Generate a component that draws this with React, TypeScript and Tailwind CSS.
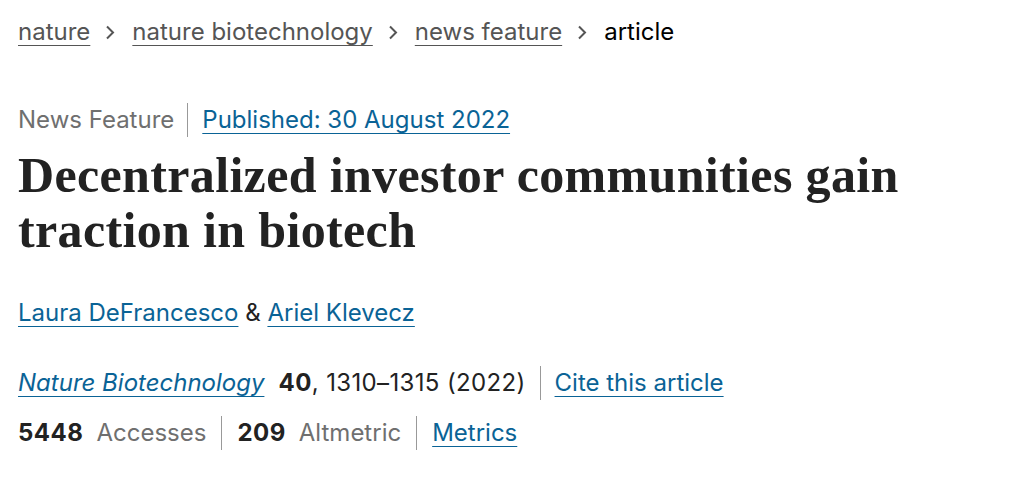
import React from "react";

const sans = { fontFamily: "Inter, 'Noto Sans', sans-serif" };

function Chevron() {
  return (
    <svg width="10" height="15" viewBox="0 0 10 15" className="ml-[15px] mr-[17px]">
      <path d="M2 1.5 L8 7.5 L2 13.5" fill="none" stroke="#555" strokeWidth="2" />
    </svg>
  );
}

const link = "underline underline-offset-[5px] decoration-[1px]";

export default function App() {
  return (
    <div className="w-[1024px] h-[494px] bg-white text-[#222] pl-[18px]" style={sans}>
      <nav className="flex items-center h-[64px] text-[24px]">
        <a className={`text-[#555] ${link}`}>nature</a>
        <Chevron />
        <a className={`text-[#555] ${link}`}>nature biotechnology</a>
        <Chevron />
        <a className={`text-[#555] ${link}`}>news feature</a>
        <Chevron />
        <span className="text-black">article</span>
      </nav>
      <div className="flex items-center mt-[38px] text-[24px]">
        <span className="text-[#6f6f6f] pr-[13px] border-r border-[#999] leading-[34px]">News Feature</span>
        <a className={`pl-[14px] text-[#0a6396] ${link}`}>Published: 30 August 2022</a>
      </div>
      <h1
        className="mt-[10px] text-[50px] leading-[55px] font-bold text-[#222] tracking-[0.35px]"
        style={{ fontFamily: "'Liberation Serif', serif" }}
      >
        Decentralized investor communities gain
        <br />
        traction in biotech
      </h1>
      <div className="mt-[37px] text-[24px]">
        <a className={`text-[#0a6396] ${link}`}>Laura DeFrancesco</a>
        <span> &amp; </span>
        <a className={`text-[#0a6396] ${link}`}>Ariel Klevecz</a>
      </div>
      <div className="flex items-center mt-[34px] text-[24px]">
        <a className={`italic text-[#0a6396] ${link}`}>Nature Biotechnology</a>
        <span className="ml-[14px] pr-[14px] border-r border-[#999] leading-[34px]">
          <b className="tracking-[0.5px]">40</b>
          <span className="tracking-[0.35px]">, 1310–1315 (2022)</span>
        </span>
        <a className={`pl-[14px] text-[#0a6396] ${link}`}>Cite this article</a>
      </div>
      <div className="flex items-center mt-[14px] text-[24px]">
        <span className="pr-[15px] border-r border-[#999] leading-[34px]">
          <b className="tracking-[0.5px]">5448</b>
          <span className="ml-[13px] text-[#6f6f6f]">Accesses</span>
        </span>
        <span className="px-[15px] border-r border-[#999] leading-[34px]">
          <b className="tracking-[0.5px]">209</b>
          <span className="ml-[13px] text-[#6f6f6f]">Altmetric</span>
        </span>
        <a className={`pl-[15px] text-[#0a6396] ${link}`}>Metrics</a>
      </div>
    </div>
  );
}
